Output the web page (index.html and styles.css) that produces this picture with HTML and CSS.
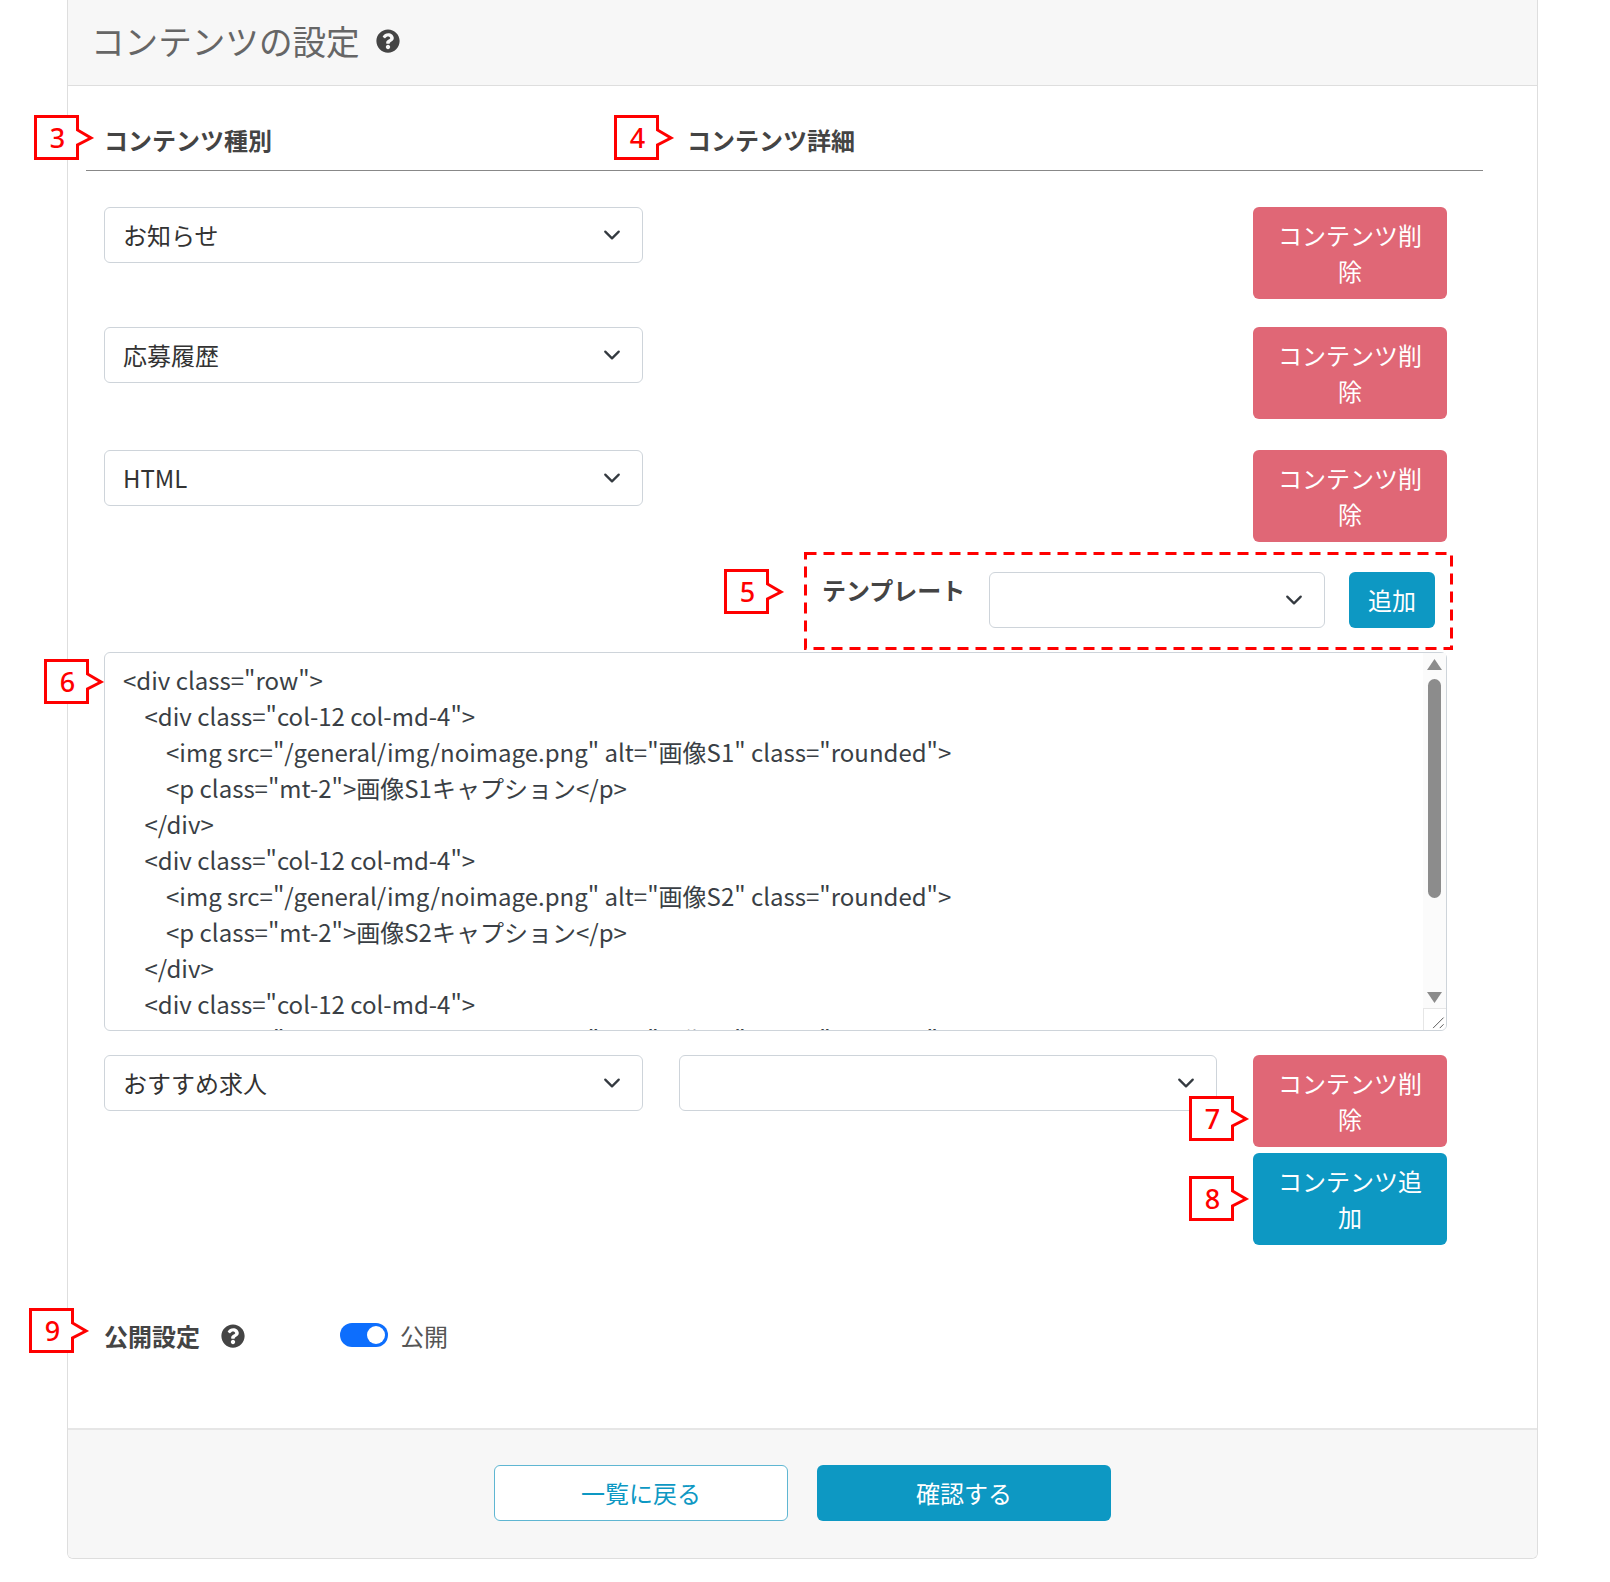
FILE: index.html
```html
<!DOCTYPE html>
<html lang="ja">
<head>
<meta charset="utf-8">
<title>コンテンツの設定</title>
<link rel="stylesheet" href="styles.css">
</head>
<body>
<main class="card">
  <header class="card-header">
    <h2 class="title">コンテンツの設定</h2>
    <svg class="help" viewBox="0 0 512 512"><path d="M504 256c0 136.997-111.043 248-248 248S8 392.997 8 256C8 119.083 119.043 8 256 8s248 111.083 248 248zM262.655 90c-54.497 0-89.255 22.957-116.549 63.758-3.536 5.286-2.353 12.415 2.715 16.258l34.699 26.31c5.205 3.947 12.621 3.008 16.665-2.122 17.864-22.658 30.113-35.797 57.303-35.797 20.429 0 45.698 13.148 45.698 32.958 0 14.976-12.363 22.667-32.534 33.976C247.128 238.528 216 254.941 216 296v4c0 6.627 5.373 12 12 12h56c6.627 0 12-5.373 12-12v-1.333c0-28.462 83.186-29.647 83.186-106.667 0-58.002-60.165-102-116.531-102zM256 338c-25.365 0-46 20.635-46 46 0 25.364 20.635 46 46 46s46-20.636 46-46c0-25.365-20.635-46-46-46z"/></svg>
  </header>

  <section class="card-body">
    <div class="columns-head">
      <div class="col-type">コンテンツ種別</div>
      <div class="col-detail">コンテンツ詳細</div>
    </div>

    <div class="content-list">
      <div class="content-row row-first">
        <select class="select"><option>お知らせ</option></select>
        <div></div>
        <button class="btn btn-danger">コンテンツ削除</button>
      </div>
      <div class="content-row">
        <select class="select"><option>応募履歴</option></select>
        <div></div>
        <button class="btn btn-danger">コンテンツ削除</button>
      </div>
      <div class="content-row row-tight">
        <select class="select"><option>HTML</option></select>
        <div></div>
        <button class="btn btn-danger">コンテンツ削除</button>
      </div>

      <div class="template-wrap">
        <div class="template-box">
          <svg class="dash-frame" viewBox="0 0 649 98"><rect x="1.5" y="1.5" width="646" height="95"/></svg>
          <span class="template-label">テンプレート</span>
          <select class="select select-template"><option></option></select>
          <button class="btn btn-primary">追加</button>
        </div>
      </div>

      <div class="editor">
        <textarea class="code" readonly spellcheck="false">&lt;div class="row"&gt;
    &lt;div class="col-12 col-md-4"&gt;
        &lt;img src="/general/img/noimage.png" alt="画像S1" class="rounded"&gt;
        &lt;p class="mt-2"&gt;画像S1キャプション&lt;/p&gt;
    &lt;/div&gt;
    &lt;div class="col-12 col-md-4"&gt;
        &lt;img src="/general/img/noimage.png" alt="画像S2" class="rounded"&gt;
        &lt;p class="mt-2"&gt;画像S2キャプション&lt;/p&gt;
    &lt;/div&gt;
    &lt;div class="col-12 col-md-4"&gt;
        &lt;img src="/general/img/noimage.png" alt="画像S3" class="rounded"&gt;
        &lt;p class="mt-2"&gt;画像S3キャプション&lt;/p&gt;
    &lt;/div&gt;
&lt;/div&gt;</textarea>
        <div class="scrollbar">
          <span class="arrow arrow-up"></span>
          <span class="thumb"></span>
          <span class="arrow arrow-down"></span>
        </div>
        <div class="resizer">
          <svg viewBox="0 0 22 22"><path d="M9 20L20 9M16 20L20 16"/></svg>
        </div>
      </div>

      <div class="content-row row-last">
        <select class="select"><option>おすすめ求人</option></select>
        <select class="select"><option></option></select>
        <button class="btn btn-danger">コンテンツ削除</button>
      </div>
      <div class="content-row row-add">
        <div></div>
        <div></div>
        <button class="btn btn-primary">コンテンツ追加</button>
      </div>
    </div>

    <div class="publish">
      <span class="publish-label">公開設定</span>
      <svg class="help help-publish" viewBox="0 0 512 512"><path d="M504 256c0 136.997-111.043 248-248 248S8 392.997 8 256C8 119.083 119.043 8 256 8s248 111.083 248 248zM262.655 90c-54.497 0-89.255 22.957-116.549 63.758-3.536 5.286-2.353 12.415 2.715 16.258l34.699 26.31c5.205 3.947 12.621 3.008 16.665-2.122 17.864-22.658 30.113-35.797 57.303-35.797 20.429 0 45.698 13.148 45.698 32.958 0 14.976-12.363 22.667-32.534 33.976C247.128 238.528 216 254.941 216 296v4c0 6.627 5.373 12 12 12h56c6.627 0 12-5.373 12-12v-1.333c0-28.462 83.186-29.647 83.186-106.667 0-58.002-60.165-102-116.531-102zM256 338c-25.365 0-46 20.635-46 46 0 25.364 20.635 46 46 46s46-20.636 46-46c0-25.365-20.635-46-46-46z"/></svg>
      <span class="switch"><span class="switch-knob"></span></span>
      <span class="switch-text">公開</span>
    </div>
  </section>

  <footer class="card-footer">
    <button class="btn btn-wide btn-outline">一覧に戻る</button>
    <button class="btn btn-wide btn-primary">確認する</button>
  </footer>
</main>

<div class="callout c3"><svg viewBox="0 0 62 45"><path d="M1.5 1.5H43.5V15L57 23L43.5 30V43.5H1.5Z"/></svg><span>3</span></div>
<div class="callout c4"><svg viewBox="0 0 62 45"><path d="M1.5 1.5H43.5V15L57 23L43.5 30V43.5H1.5Z"/></svg><span>4</span></div>
<div class="callout c5"><svg viewBox="0 0 62 45"><path d="M1.5 1.5H43.5V15L57 23L43.5 30V43.5H1.5Z"/></svg><span>5</span></div>
<div class="callout c6"><svg viewBox="0 0 62 45"><path d="M1.5 1.5H43.5V15L57 23L43.5 30V43.5H1.5Z"/></svg><span>6</span></div>
<div class="callout c7"><svg viewBox="0 0 62 45"><path d="M1.5 1.5H43.5V15L57 23L43.5 30V43.5H1.5Z"/></svg><span>7</span></div>
<div class="callout c8"><svg viewBox="0 0 62 45"><path d="M1.5 1.5H43.5V15L57 23L43.5 30V43.5H1.5Z"/></svg><span>8</span></div>
<div class="callout c9"><svg viewBox="0 0 62 45"><path d="M1.5 1.5H43.5V15L57 23L43.5 30V43.5H1.5Z"/></svg><span>9</span></div>
</body>
</html>
```

FILE: styles.css
```css
* { box-sizing: border-box; }

html, body {
  margin: 0;
  padding: 0;
  background: #fff;
}

body {
  position: relative;
  padding: 0 72px 24px 67px;
  font-family: "Noto Sans CJK JP", "Noto Sans", sans-serif;
  font-size: 24px;
  line-height: 36px;
  color: #333;
}

.card {
  width: 1471px;
  border: 1px solid #dedede;
  border-top: 0;
  border-radius: 0 0 6px 6px;
  background: #fff;
  overflow: hidden;
}

.card-header {
  display: flex;
  align-items: center;
  gap: 16px;
  height: 86px;
  padding: 0 0 3px 23px;
  background: #f7f7f7;
  border-bottom: 1px solid #dedede;
}

.title {
  margin: 0;
  font-size: 33.6px;
  line-height: 48px;
  font-weight: 400;
  color: #666;
}

.help {
  flex: none;
  width: 24px;
  height: 24px;
  fill: #444;
}

.card-body {
  padding: 37px 0 74px 18px;
}

.columns-head {
  display: flex;
  width: 1397px;
  height: 48px;
  line-height: 34px;
  font-weight: 700;
  color: #444;
  border-bottom: 1px solid #888;
}

.col-type {
  width: 582px;
  padding-left: 18px;
}

.col-detail {
  padding-left: 19px;
}

.content-list {
  margin: 36px 0 0 18px;
  width: 1343px;
}

.content-row {
  display: grid;
  grid-template-columns: 539px 538px 194px;
  column-gap: 36px;
  align-items: start;
  margin-bottom: 31px;
}

.row-first { margin-bottom: 28px; }
.row-tight { margin-bottom: 10px; }
.row-last { margin-bottom: 6px; }
.row-add { margin-bottom: 0; }

.select {
  display: block;
  width: 100%;
  height: 56px;
  padding: 0 54px 0 18px;
  font: inherit;
  color: #333;
  background-color: #fff;
  background-image: url("data:image/svg+xml,%3csvg xmlns='http://www.w3.org/2000/svg' viewBox='0 0 16 16'%3e%3cpath fill='none' stroke='%23343a40' stroke-linecap='round' stroke-linejoin='round' stroke-width='2' d='M2 5l6 6 6-6'/%3e%3c/svg%3e");
  background-repeat: no-repeat;
  background-position: right 18px center;
  background-size: 24px 18px;
  border: 1px solid #ced4da;
  border-radius: 6px;
  appearance: none;
}

.btn {
  display: block;
  width: 100%;
  padding: 9px 18px;
  font: inherit;
  color: #fff;
  text-align: center;
  border: 1px solid transparent;
  border-radius: 6px;
}

.btn-danger { background: #e06776; }
.btn-primary { background: #0d98c3; }

.template-wrap {
  display: flex;
  justify-content: flex-end;
  margin: 0 -6px 2px 0;
}

.template-box {
  position: relative;
  display: flex;
  align-items: flex-start;
  width: 649px;
  height: 98px;
  padding: 20px;
}

.dash-frame {
  position: absolute;
  top: 0;
  left: 0;
  width: 649px;
  height: 98px;
  fill: none;
  stroke: #f00;
  stroke-width: 3;
  stroke-dasharray: 11 7;
}

.template-label {
  flex: none;
  width: 165px;
  margin-left: -2px;
  margin-right: 2px;
  line-height: 36px;
  font-weight: 700;
  color: #444;
}

.select-template {
  flex: none;
  width: 336px;
}

.template-box .btn-primary {
  flex: none;
  width: 86px;
  height: 56px;
  margin-left: 24px;
}

.editor {
  position: relative;
  height: 379px;
  margin-bottom: 24px;
}

.code {
  display: block;
  width: 100%;
  height: 100%;
  padding: 9px 18px 0;
  font: inherit;
  color: #3a3f45;
  background: #fff;
  border: 1px solid #ced4da;
  border-radius: 6px;
  outline: 0;
  resize: none;
  overflow: hidden;
}

.scrollbar {
  position: absolute;
  top: 1px;
  right: 1px;
  bottom: 23px;
  width: 23px;
  background: #fbfbfb;
}

.thumb {
  position: absolute;
  top: 26px;
  left: 5px;
  width: 13px;
  height: 219px;
  border-radius: 7px;
  background: #8c8c8c;
}

.arrow {
  position: absolute;
  left: 4px;
  width: 15px;
  height: 11px;
  background: #8c8c8c;
}

.arrow-up {
  top: 6px;
  clip-path: polygon(50% 0, 100% 100%, 0 100%);
}

.arrow-down {
  bottom: 5px;
  clip-path: polygon(0 0, 100% 0, 50% 100%);
}

.resizer {
  position: absolute;
  right: 1px;
  bottom: 1px;
  width: 23px;
  height: 22px;
  background: #fff;
  border-top: 1px solid #e6e6e6;
  border-left: 1px solid #e6e6e6;
  border-bottom-right-radius: 5px;
}

.resizer svg {
  display: block;
  width: 22px;
  height: 21px;
  fill: none;
  stroke: #555;
  stroke-width: 1;
}

.publish {
  display: flex;
  align-items: center;
  height: 36px;
  margin: 73px 0 0 18px;
}

.publish-label {
  width: 117px;
  font-weight: 700;
  color: #444;
}

.help-publish {
  margin-right: 95px;
}

.switch {
  position: relative;
  flex: none;
  width: 48px;
  height: 24px;
  margin-top: -2px;
  border-radius: 12px;
  background: #0d6efd;
}

.switch-knob {
  position: absolute;
  top: 3px;
  right: 3px;
  width: 18px;
  height: 18px;
  border-radius: 50%;
  background: #fff;
}

.switch-text {
  margin-left: 12px;
  color: #555;
}

.card-footer {
  display: flex;
  justify-content: center;
  gap: 29px;
  height: 130px;
  padding-top: 35px;
  background: #f7f7f7;
  border-top: 2px solid #e6e6e6;
}

.btn-wide {
  width: 294px;
  height: 56px;
}

.btn-outline {
  background: #fff;
  color: #0d98c3;
  border-color: #5fb6d2;
}

.callout {
  position: absolute;
  width: 62px;
  height: 45px;
}

.callout svg {
  position: absolute;
  inset: 0;
  width: 62px;
  height: 45px;
  fill: #fff;
  stroke: #f00;
  stroke-width: 3;
}

.callout span {
  position: absolute;
  top: 0;
  left: 1px;
  width: 45px;
  height: 45px;
  font-family: "Noto Sans", sans-serif;
  font-size: 27px;
  font-weight: 500;
  line-height: 46px;
  text-align: center;
  color: #f00;
}

.c3 { left: 34px; top: 115px; }
.c4 { left: 614px; top: 115px; }
.c5 { left: 724px; top: 569px; }
.c6 { left: 44px; top: 659px; }
.c7 { left: 1189px; top: 1096px; }
.c8 { left: 1189px; top: 1176px; }
.c9 { left: 29px; top: 1308px; }
```
